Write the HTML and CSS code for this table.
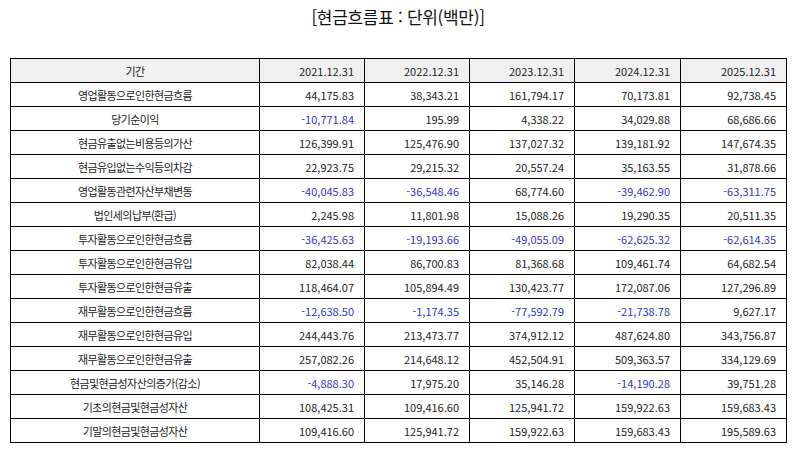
FILE: index.html
```html
<!DOCTYPE html>
<html lang="ko">
<head>
<meta charset="utf-8">
<link rel="stylesheet" href="styles.css">
</head>
<body>
<div class="page">
  <h1 class="title">[현금흐름표 : 단위(백만)]</h1>
  <table class="cf">
    <colgroup>
      <col class="c-label"><col class="c-num"><col class="c-num"><col class="c-num"><col class="c-num2"><col class="c-num2">
    </colgroup>
    <thead>
      <tr><th class="lbl">기간</th><th>2021.12.31</th><th>2022.12.31</th><th>2023.12.31</th><th>2024.12.31</th><th>2025.12.31</th></tr>
    </thead>
    <tbody>
      <tr><td class="lbl">영업활동으로인한현금흐름</td><td>44,175.83</td><td>38,343.21</td><td>161,794.17</td><td>70,173.81</td><td>92,738.45</td></tr>
      <tr><td class="lbl">당기순이익</td><td class="neg">-10,771.84</td><td>195.99</td><td>4,338.22</td><td>34,029.88</td><td>68,686.66</td></tr>
      <tr><td class="lbl">현금유출없는비용등의가산</td><td>126,399.91</td><td>125,476.90</td><td>137,027.32</td><td>139,181.92</td><td>147,674.35</td></tr>
      <tr><td class="lbl">현금유입없는수익등의차감</td><td>22,923.75</td><td>29,215.32</td><td>20,557.24</td><td>35,163.55</td><td>31,878.66</td></tr>
      <tr><td class="lbl">영업활동관련자산부채변동</td><td class="neg">-40,045.83</td><td class="neg">-36,548.46</td><td>68,774.60</td><td class="neg">-39,462.90</td><td class="neg">-63,311.75</td></tr>
      <tr><td class="lbl">법인세의납부(환급)</td><td>2,245.98</td><td>11,801.98</td><td>15,088.26</td><td>19,290.35</td><td>20,511.35</td></tr>
      <tr><td class="lbl">투자활동으로인한현금흐름</td><td class="neg">-36,425.63</td><td class="neg">-19,193.66</td><td class="neg">-49,055.09</td><td class="neg">-62,625.32</td><td class="neg">-62,614.35</td></tr>
      <tr><td class="lbl">투자활동으로인한현금유입</td><td>82,038.44</td><td>86,700.83</td><td>81,368.68</td><td>109,461.74</td><td>64,682.54</td></tr>
      <tr><td class="lbl">투자활동으로인한현금유출</td><td>118,464.07</td><td>105,894.49</td><td>130,423.77</td><td>172,087.06</td><td>127,296.89</td></tr>
      <tr><td class="lbl">재무활동으로인한현금흐름</td><td class="neg">-12,638.50</td><td class="neg">-1,174.35</td><td class="neg">-77,592.79</td><td class="neg">-21,738.78</td><td>9,627.17</td></tr>
      <tr><td class="lbl">재무활동으로인한현금유입</td><td>244,443.76</td><td>213,473.77</td><td>374,912.12</td><td>487,624.80</td><td>343,756.87</td></tr>
      <tr><td class="lbl">재무활동으로인한현금유출</td><td>257,082.26</td><td>214,648.12</td><td>452,504.91</td><td>509,363.57</td><td>334,129.69</td></tr>
      <tr><td class="lbl">현금및현금성자산의증가(감소)</td><td class="neg">-4,888.30</td><td>17,975.20</td><td>35,146.28</td><td class="neg">-14,190.28</td><td>39,751.28</td></tr>
      <tr><td class="lbl">기초의현금및현금성자산</td><td>108,425.31</td><td>109,416.60</td><td>125,941.72</td><td>159,922.63</td><td>159,683.43</td></tr>
      <tr><td class="lbl">기말의현금및현금성자산</td><td>109,416.60</td><td>125,941.72</td><td>159,922.63</td><td>159,683.43</td><td>195,589.63</td></tr>
    </tbody>
  </table>
</div>
</body>
</html>
```

FILE: styles.css
```css
html, body {
  margin: 0;
  padding: 0;
  background: #ffffff;
}
body {
  font-family: "Noto Sans CJK KR", "Noto Sans", sans-serif;
  color: #222222;
}
.page {
  padding: 0 9px 0 10px;
}
.title {
  margin: 0;
  padding-top: 4px;
  height: 58px;
  box-sizing: border-box;
  text-align: center;
  font-size: 17px;
  font-weight: normal;
  line-height: 26px;
  letter-spacing: -0.3px;
  color: #111111;
}
.cf {
  width: 776px;
  border-collapse: collapse;
  table-layout: fixed;
  font-size: 11px;
}
.c-label { width: 249px; }
.c-num { width: 105px; }
.c-num2 { width: 106px; }
.cf th, .cf td {
  border: 1px solid #000000;
  height: 24px;
  padding: 0 10px 0 4px;
  text-align: right;
  font-weight: normal;
  line-height: 14px;
  white-space: nowrap;
  box-sizing: border-box;
}
.cf th {
  background: #f0f0f0;
}
.cf .lbl {
  text-align: center;
  padding: 0 4px;
  letter-spacing: -0.6px;
}
.cf .neg {
  color: #3535c8;
}
```
